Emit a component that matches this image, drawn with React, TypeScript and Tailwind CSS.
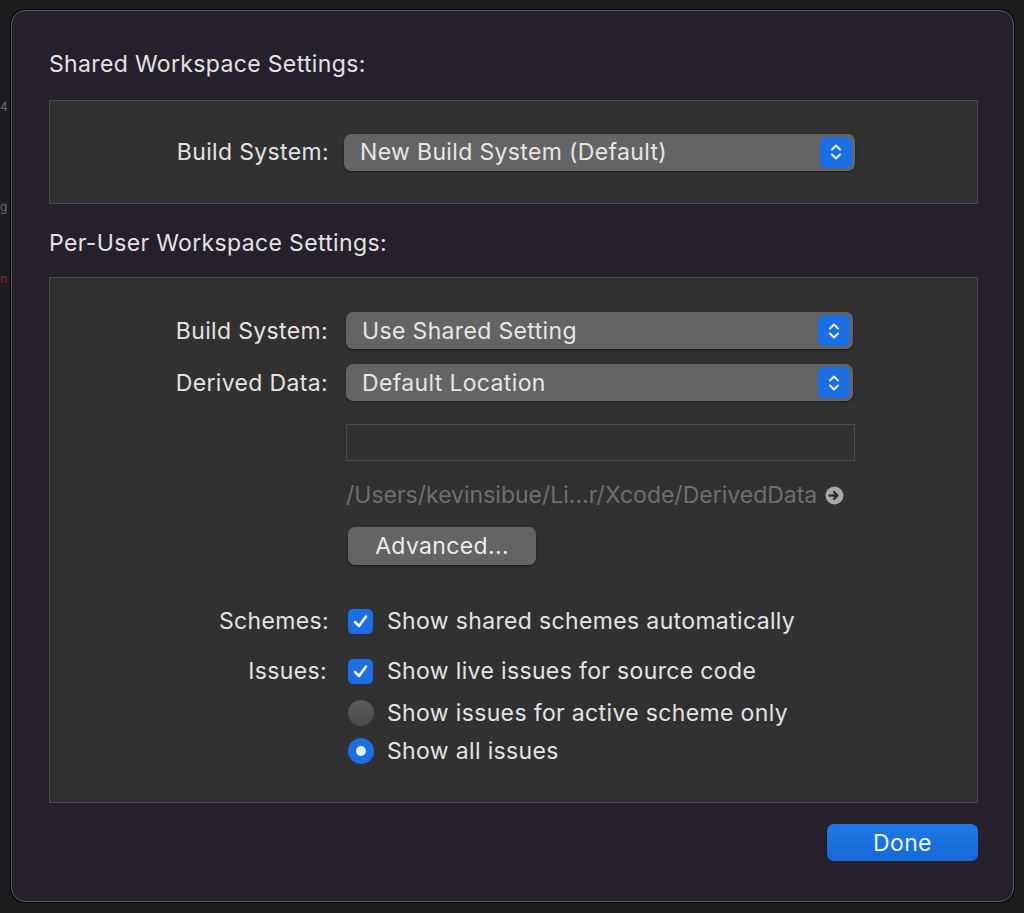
import React from 'react';

const font = { fontFamily: 'Inter, "Noto Sans", sans-serif' };

function Stepper() {
  return (
    <div className="absolute right-[3px] top-[3px] bottom-[3px] w-[32px] rounded-[6px] bg-[#1b6ee3] flex items-center justify-center">
      <svg width="14" height="20" viewBox="0 0 14 20" fill="none">
        <path d="M3 7.5 L7 3.5 L11 7.5" stroke="#e8f0ff" strokeWidth="2" strokeLinecap="round" strokeLinejoin="round" />
        <path d="M3 12.5 L7 16.5 L11 12.5" stroke="#e8f0ff" strokeWidth="2" strokeLinecap="round" strokeLinejoin="round" />
      </svg>
    </div>
  );
}

function Popup({ label, w }: { label: string; w: string }) {
  return (
    <div className={`relative h-[37px] ${w} rounded-[7px] bg-[#646464] shadow-[0_1px_2px_rgba(0,0,0,0.5)] flex items-center pl-[16px] text-[#e6e6e6]`}>
      {label}
      <Stepper />
    </div>
  );
}

function Checkbox() {
  return (
    <div className="w-[25px] h-[25px] rounded-[5px] bg-[#1b6ee3] flex items-center justify-center shrink-0">
      <svg width="17" height="15" viewBox="0 0 17 15" fill="none">
        <path d="M3 8 L7 12 L14 2.5" stroke="#f2f6ff" strokeWidth="2.6" strokeLinecap="round" strokeLinejoin="round" />
      </svg>
    </div>
  );
}

function Radio({ on }: { on?: boolean }) {
  return on ? (
    <div className="w-[26px] h-[26px] rounded-full bg-[#1b6ee3] flex items-center justify-center shrink-0">
      <div className="w-[10px] h-[10px] rounded-full bg-[#e8f0ff]" />
    </div>
  ) : (
    <div className="w-[26px] h-[26px] rounded-full bg-gradient-to-b from-[#5a5a5a] to-[#4a4a4a] shrink-0" />
  );
}

export default function App() {
  return (
    <div className="relative h-[913px] w-[1024px] overflow-hidden bg-[#1d1d1f] pl-[11px] pt-[10px]" style={font}>
      {/* fragments of the window behind */}
      <div className="absolute left-0 top-[100px] text-[12px] leading-[14px] text-[#6a6a6a]">4</div>
      <div className="absolute left-0 top-[200px] text-[12px] leading-[14px] text-[#6a6a6a]">g</div>
      <div className="absolute left-0 top-[272px] text-[12px] leading-[14px] text-[#8a2b2b]">n</div>

      <div className="relative w-[1003px] h-[892px] rounded-[14px] border border-[#5f5c63] bg-[#25202b] shadow-[0_0_0_1px_#000] pl-[37px] pr-[35px] pt-[39px] text-[23px] leading-[28px] tracking-[0.35px] text-[#e3e3e3] flex flex-col">
        <div className="h-[50px]">Shared Workspace Settings:</div>

        <div className="h-[104px] border border-[#4b4b4b] bg-[#313131] flex items-center">
          <div className="w-[294px] text-right pr-[15px]">Build System:</div>
          <Popup label="New Build System (Default)" w="w-[511px]" />
        </div>

        <div className="h-[73px] pt-[25px]">Per-User Workspace Settings:</div>

        <div className="h-[526px] border border-[#4b4b4b] bg-[#313131] pt-[34px] flex flex-col">
          <div className="flex items-center h-[37px]">
            <div className="w-[296px] text-right pr-[18px]">Build System:</div>
            <Popup label="Use Shared Setting" w="w-[507px]" />
          </div>
          <div className="flex items-center h-[37px] mt-[15px]">
            <div className="w-[296px] text-right pr-[18px]">Derived Data:</div>
            <Popup label="Default Location" w="w-[507px]" />
          </div>

          <div className="ml-[296px] mt-[23px] w-[509px] h-[37px] border border-[#4a4a4a] bg-[#323232]" />

          <div className="ml-[296px] mt-[20px] flex items-center gap-[8px] text-[#6e6e6e] tracking-[0px]">
            <span>/Users/kevinsibue/Li...r/Xcode/DerivedData</span>
            <svg width="19" height="19" viewBox="0 0 19 19">
              <circle cx="9.5" cy="9.5" r="9" fill="#a9a9a9" />
              <path d="M4.5 9.5 H11.5 M9 6 L12.5 9.5 L9 13" stroke="#2f2f2f" strokeWidth="2.4" fill="none" strokeLinecap="round" strokeLinejoin="round" />
            </svg>
          </div>

          <div className="ml-[298px] mt-[18px] w-[188px] h-[38px] rounded-[7px] bg-[#646464] shadow-[0_1px_2px_rgba(0,0,0,0.5)] flex items-center justify-center text-[#ececec]">
            Advanced...
          </div>

          <div className="flex items-center mt-[42px] h-[28px]">
            <div className="w-[298px] text-right pr-[19px]">Schemes:</div>
            <Checkbox />
            <span className="ml-[14px]">Show shared schemes automatically</span>
          </div>
          <div className="flex items-center mt-[22px] h-[28px]">
            <div className="w-[298px] text-right pr-[21px]">Issues:</div>
            <Checkbox />
            <span className="ml-[14px]">Show live issues for source code</span>
          </div>
          <div className="flex items-center mt-[14px] h-[28px] pl-[298px]">
            <Radio />
            <span className="ml-[13px]">Show issues for active scheme only</span>
          </div>
          <div className="flex items-center mt-[10px] h-[28px] pl-[298px]">
            <Radio on />
            <span className="ml-[13px]">Show all issues</span>
          </div>
        </div>

        <div className="flex justify-end mt-[21px]">
          <div className="w-[151px] h-[37px] rounded-[7px] bg-gradient-to-b from-[#1c7ae6] to-[#1669d6] flex items-center justify-center text-[#eef4ff]">
            Done
          </div>
        </div>
      </div>
    </div>
  );
}
